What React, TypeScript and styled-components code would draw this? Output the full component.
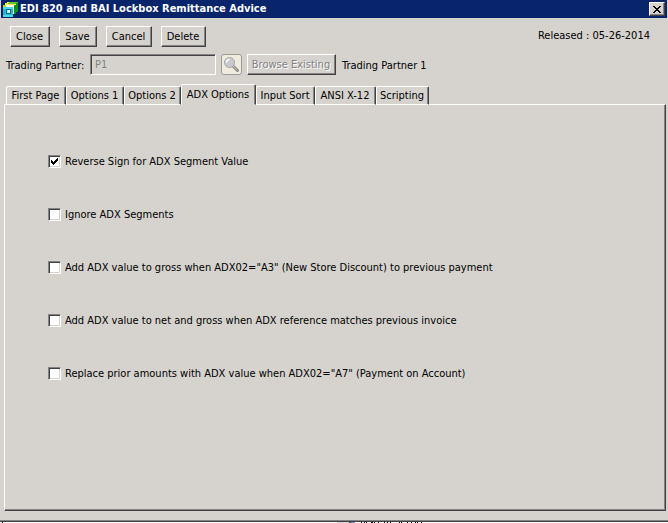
import React, { useState } from "react";
import styled, { createGlobalStyle, css } from "styled-components";

const FACE = "#d6d3ce";
const DARK = "#424142";
const SHADE = "#848284";

const GlobalStyle = createGlobalStyle`
  * { box-sizing: border-box; }
  html, body { margin: 0; background: #fff; }
  body, button, input {
    font-family: "DejaVu Sans Condensed", "DejaVu Sans", sans-serif;
    font-size: 11px;
    line-height: 13px;
    color: #000;
  }
`;

const raised = css`
  border: 1px solid;
  border-color: #fff ${DARK} ${DARK} #fff;
  box-shadow: inset -1px -1px 0 ${SHADE};
`;

const Page = styled.div`
  display: flex;
  flex-direction: column;
  height: 100vh;
`;

const Window = styled.main`
  flex: 1;
  display: flex;
  flex-direction: column;
  background: ${FACE};
  border-bottom: 1px solid ${DARK};
  box-shadow: inset 0 -1px 0 ${SHADE};
`;

const TitleBar = styled.header`
  display: flex;
  align-items: center;
  gap: 2px;
  height: 18px;
  margin: 0 1px;
  padding: 0 2px 0 1px;
  background: #08246b;
  color: #fff;
`;

const Title = styled.h1`
  flex: 1;
  margin: 0;
  font-size: 11px;
  line-height: 16px;
  font-weight: bold;
  white-space: nowrap;
`;

const CloseBox = styled.button`
  ${raised}
  display: grid;
  place-items: center;
  width: 16px;
  height: 14px;
  padding: 0;
  background: ${FACE};
`;

const Toolbar = styled.div`
  display: flex;
  gap: 9px;
  padding: 8px 18px 0 10px;
`;

const Button = styled.button<{ $width: number }>`
  ${raised}
  width: ${(p) => p.$width}px;
  height: 21px;
  padding: 0 1px 1px 0;
  background: ${FACE};
  white-space: nowrap;
  &:disabled {
    color: ${SHADE};
    text-shadow: 1px 1px 0 #fff;
  }
`;

const Released = styled.span`
  margin-left: auto;
  padding-top: 3px;
`;

const PartnerRow = styled.div`
  display: flex;
  align-items: center;
  gap: 5px;
  padding: 7px 6px 0;
`;

const PartnerLabel = styled.label`
  width: 79px;
  padding-top: 2px;
  white-space: nowrap;
`;

const PartnerInput = styled.input`
  width: 126px;
  height: 21px;
  padding: 0 4px 1px;
  border: 1px solid;
  border-color: ${SHADE} #fff #fff ${SHADE};
  box-shadow: inset 1px 1px 0 ${DARK};
  background: ${FACE};
  border-radius: 0;
  &:disabled { color: ${SHADE}; }
`;

const LookupButton = styled.button`
  display: grid;
  place-items: center;
  width: 21px;
  height: 21px;
  padding: 0;
  border: 1px solid #9c9a94;
  border-radius: 3px;
  background: #efebde;
`;

const PartnerName = styled.output`
  padding: 2px 0 0 1px;
`;

const TabList = styled.div`
  display: flex;
  align-items: flex-end;
  height: 30px;
  padding: 0 6px;
  margin-bottom: -1px;
`;

const Tab = styled.button<{ $active: boolean; $width: number }>`
  position: relative;
  width: ${(p) => p.$width}px;
  height: ${(p) => (p.$active ? 21 : 19)}px;
  padding: 0 1px ${(p) => (p.$active ? 1 : 0)}px 0;
  border: 1px solid;
  border-color: #fff ${DARK} ${(p) => (p.$active ? FACE : "#fff")} #fff;
  border-radius: 2px 2px 0 0;
  background: ${FACE};
  box-shadow: inset -1px 0 0 ${SHADE};
  white-space: nowrap;
`;

const Panel = styled.section`
  ${raised}
  flex: 1;
  display: flex;
  flex-direction: column;
  gap: 40px;
  margin: 0 2px 10px 4px;
  padding: 50px 43px;
`;

const Option = styled.label`
  display: flex;
  align-items: center;
  gap: 4px;
  height: 13px;
  white-space: nowrap;
`;

const CheckFrame = styled.span`
  display: grid;
  width: 13px;
  height: 13px;
  > * { grid-area: 1 / 1; }
`;

const CheckInput = styled.input`
  appearance: none;
  width: 13px;
  height: 13px;
  margin: 0;
  border: 1px solid;
  border-color: ${SHADE} #fff #fff ${SHADE};
  background: #fff;
  box-shadow: inset 1px 1px 0 ${DARK}, inset -1px -1px 0 ${FACE};
`;

const CheckMark = styled.svg`
  pointer-events: none;
`;

const Behind = styled.svg`
  display: block;
  flex: none;
  width: 100%;
  height: 1px;
`;

const TABS = [
  { name: "First Page", width: 60 },
  { name: "Options 1", width: 58 },
  { name: "Options 2", width: 57 },
  { name: "ADX Options", width: 75 },
  { name: "Input Sort", width: 59 },
  { name: "ANSI X-12", width: 61 },
  { name: "Scripting", width: 53 },
];

const OPTIONS = [
  "Reverse Sign for ADX Segment Value",
  "Ignore ADX Segments",
  'Add ADX value to gross when ADX02="A3" (New Store Discount) to previous payment',
  "Add ADX value to net and gross when ADX reference matches previous invoice",
  'Replace prior amounts with ADX value when ADX02="A7" (Payment on Account)',
];

function AppIcon() {
  return (
    <svg width="16" height="17" viewBox="0 0 16 17" shapeRendering="crispEdges" aria-hidden="true">
      <path d="M1 4h2V2h2V1h11v1h-2v2h-2v1H1z" fill="#f7ef42" />
      <path d="M7 1h9v2H6z" fill="#63c731" />
      <path d="M12 4h2V2h2v9h-2v2h-2z" fill="#089618" />
      <path d="M4 4h8v9H4z" fill="#fff" />
      <path d="M1 4h3v3H1z" fill="#bdd729" />
      <path d="M1 6h10v10H1z" fill="#29b6ce" />
      <path d="M1 6h10v2H1zM1 14h10v2H1z" fill="#42dbe7" />
      <path d="M4 8h5v5H4z" fill="#106b94" />
      <path d="M5 9h3v3H5z" fill="#9ceff7" />
      <path d="M6 9h2v2H6z" fill="#fff" />
    </svg>
  );
}

function Magnifier() {
  return (
    <svg width="17" height="17" viewBox="0 0 17 17" aria-hidden="true">
      <path d="M10 10 14.5 14.5" stroke="#8c8a8c" strokeWidth="3" strokeLinecap="round" />
      <path d="M10 10 14 14" stroke="#c6c3c6" strokeWidth="1" />
      <circle cx="6.5" cy="6.5" r="5" fill="#c9cacd" stroke="#a5a6a8" />
      <path d="M3.5 6.5a3 3 0 0 1 3-3" fill="none" stroke="#fff" strokeWidth="1.5" />
    </svg>
  );
}

function CheckOption({ text, initial }: { text: string; initial: boolean }) {
  const [checked, setChecked] = useState(initial);
  return (
    <Option>
      <CheckFrame>
        <CheckInput type="checkbox" checked={checked} onChange={(e) => setChecked(e.target.checked)} />
        {checked && (
          <CheckMark width="13" height="13" viewBox="0 0 13 13" shapeRendering="crispEdges">
            <path d="M3 5h1v1h1v1h1v-1h1v-1h1v-1h1v-1h1v3h-1v1h-1v1h-1v1h-1v1h-1v-1h-1v-1h-1z" />
          </CheckMark>
        )}
      </CheckFrame>
      {text}
    </Option>
  );
}

export default function App() {
  const [active, setActive] = useState("ADX Options");
  return (
    <Page>
      <GlobalStyle />
      <Window>
        <TitleBar>
          <AppIcon />
          <Title>EDI 820 and BAI Lockbox Remittance Advice</Title>
          <CloseBox aria-label="Close window">
            <svg width="8" height="7" viewBox="0 0 8 7" shapeRendering="crispEdges">
              <path d="M0 0h2v1h1v1h2v-1h1v-1h2v1h-1v1h-1v1h-1v1h1v1h1v1h1v1h-2v-1h-1v-1h-2v1h-1v1h-2v-1h1v-1h1v-1h1v-1h-1v-1h-1v-1h-1z" />
            </svg>
          </CloseBox>
        </TitleBar>
        <Toolbar>
          <Button $width={40}>Close</Button>
          <Button $width={38}>Save</Button>
          <Button $width={46}>Cancel</Button>
          <Button $width={45}>Delete</Button>
          <Released>Released : 05-26-2014</Released>
        </Toolbar>
        <PartnerRow>
          <PartnerLabel htmlFor="partner">Trading Partner:</PartnerLabel>
          <PartnerInput id="partner" type="text" defaultValue="P1" disabled />
          <LookupButton aria-label="Look up partner" disabled>
            <Magnifier />
          </LookupButton>
          <Button $width={89} disabled>Browse Existing</Button>
          <PartnerName htmlFor="partner">Trading Partner 1</PartnerName>
        </PartnerRow>
        <TabList role="tablist">
          {TABS.map((t) => (
            <Tab
              key={t.name}
              role="tab"
              aria-selected={t.name === active}
              $active={t.name === active}
              $width={t.width}
              onClick={() => setActive(t.name)}
            >
              {t.name}
            </Tab>
          ))}
        </TabList>
        <Panel role="tabpanel" aria-label={active}>
          {OPTIONS.map((text, i) => (
            <CheckOption key={text} text={text} initial={i === 0} />
          ))}
        </Panel>
      </Window>
      <Behind shapeRendering="crispEdges" aria-hidden="true">
        <path d="M2 0h1v1h-1zM361 0h1v1h-1zM364 0h1v1h-1zM366 0h1v1h-1zM371 0h2v1h-2zM374 0h1v1h-1zM378 0h1v1h-1zM384 0h1v1h-1zM387 0h1v1h-1zM390 0h1v1h-1zM399 0h1v1h-1zM401 0h1v1h-1zM407 0h1v1h-1zM411 0h1v1h-1zM415 0h1v1h-1zM417 0h1v1h-1zM421 0h1v1h-1z" />
        <path d="M337 0h12v1h-12z" fill="#d6d3ce" />
        <path d="M349 0h2v1h-2z" fill="#525563" />
        <path d="M351 0h4v1h-4z" fill="#6b8ece" />
      </Behind>
    </Page>
  );
}
